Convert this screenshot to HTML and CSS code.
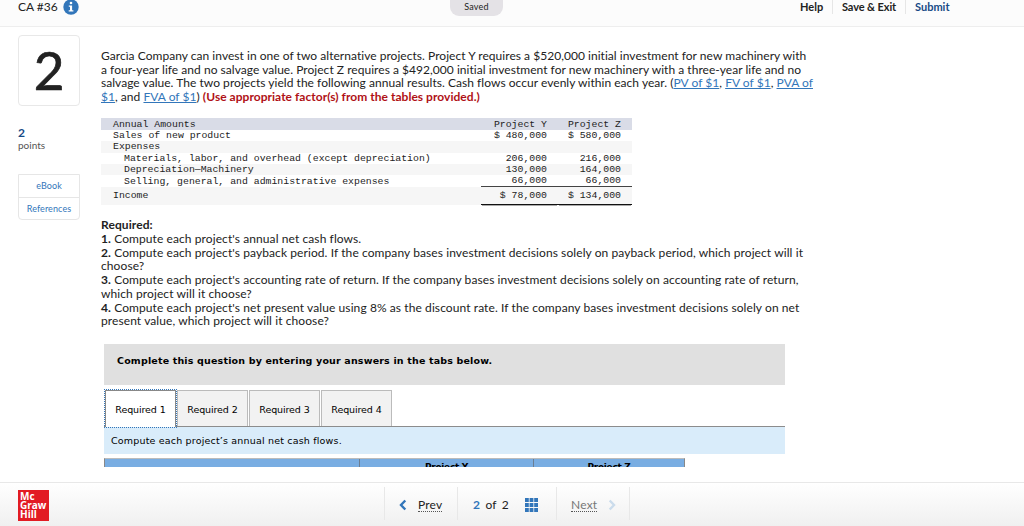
FILE: index.html
```
<!DOCTYPE html>
<html lang="en">
<head>
    <meta charset="UTF-8">
    <meta name="viewport" content="width=device-width, initial-scale=1.0">
    <title>CA #36</title>
    <link rel="stylesheet" href="styles.css">
</head>
<body>
    <header class="top-bar">
        <div class="title">CA #36</div>
        <svg class="info-icon" viewBox="0 0 16 16" width="16" height="16">
            <circle cx="8" cy="8" r="7.7" fill="#3276ba"/>
            <circle cx="8" cy="4" r="1.3" fill="#fff"/>
            <path d="M5.8 6.4h3.3v4.9h1.3v1.3H5.7v-1.3H7V7.7H5.8z" fill="#fff"/>
        </svg>
        <div class="saved">Saved</div>
        <nav class="top-links">
            <a class="help">Help</a>
            <a class="save-exit">Save &amp; Exit</a>
            <a class="submit">Submit</a>
        </nav>
    </header>

    <main class="main-container">
        <aside class="sidebar">
            <div class="question-number">2</div>
            <div class="points"><b>2</b>points</div>
            <div class="resources">
                <a>eBook</a>
                <a>References</a>
            </div>
        </aside>

        <section class="question">
            <p class="intro">
                Garcìa Company can invest in one of two alternative projects. Project Y requires a $520,000 initial investment for new machinery with<br>
                a four-year life and no salvage value. Project Z requires a $492,000 initial investment for new machinery with a three-year life and no<br>
                salvage value. The two projects yield the following annual results. Cash flows occur evenly within each year. (<a>PV of $1</a>, <a>FV of $1</a>, <a>PVA of</a><br>
                <a>$1</a>, and <a>FVA of $1</a>) <b class="note">(Use appropriate factor(s) from the tables provided.)</b>
            </p>

            <table class="amounts">
                <tr class="head"><td>Annual Amounts</td><td>Project Y</td><td>Project Z</td></tr>
                <tr><td>Sales of new product</td><td>$ 480,000</td><td>$ 580,000</td></tr>
                <tr class="shade"><td>Expenses</td><td></td><td></td></tr>
                <tr class="sub"><td>Materials, labor, and overhead (except depreciation)</td><td>206,000</td><td>216,000</td></tr>
                <tr class="sub shade"><td>Depreciation—Machinery</td><td>130,000</td><td>164,000</td></tr>
                <tr class="sub last"><td>Selling, general, and administrative expenses</td><td>66,000</td><td>66,000</td></tr>
                <tr class="shade income"><td>Income</td><td>$ 78,000</td><td>$ 134,000</td></tr>
            </table>

            <p class="required">
                <b>Required:</b><br>
                <b>1.</b> Compute each project's annual net cash flows.<br>
                <b>2.</b> Compute each project's payback period. If the company bases investment decisions solely on payback period, which project will it<br>
                choose?<br>
                <b>3.</b> Compute each project's accounting rate of return. If the company bases investment decisions solely on accounting rate of return,<br>
                which project will it choose?<br>
                <b>4.</b> Compute each project's net present value using 8% as the discount rate. If the company bases investment decisions solely on net<br>
                present value, which project will it choose?
            </p>

            <div class="answer">
                <div class="answer-title">Complete this question by entering your answers in the tabs below.</div>
                <div class="tabs">
                    <div class="tab active">Required 1</div>
                    <div class="tab">Required 2</div>
                    <div class="tab">Required 3</div>
                    <div class="tab">Required 4</div>
                </div>
                <div class="tab-text">Compute each project’s annual net cash flows.</div>
                <div class="sheet">
                    <div></div>
                    <div>Project Y</div>
                    <div>Project Z</div>
                </div>
            </div>
        </section>
    </main>

    <footer class="bottom-bar">
        <div class="logo">Mc<br>Graw<br>Hill</div>
        <div class="pager">
            <div class="prev">
                <svg viewBox="0 0 8 12" width="8" height="12"><path d="M6.3 1.5L2 6l4.3 4.5" fill="none" stroke="#3276ba" stroke-width="2.4"/></svg>
                <span>Prev</span>
            </div>
            <div class="current">
                <b>2</b><span>of</span><span>2</span>
                <svg viewBox="0 0 13 14" width="13" height="14" fill="#3276ba">
                    <path d="M0 0h3.8v4H0zM4.6 0h3.8v4H4.6zM9.2 0H13v4H9.2zM0 5h3.8v4H0zM4.6 5h3.8v4H4.6zM9.2 5H13v4H9.2zM0 10h3.8v4H0zM4.6 10h3.8v4H4.6zM9.2 10H13v4H9.2z"/>
                </svg>
            </div>
            <div class="next">
                <span>Next</span>
                <svg viewBox="0 0 8 12" width="8" height="12"><path d="M1.7 1.5L6 6l-4.3 4.5" fill="none" stroke="#cbdcec" stroke-width="2.4"/></svg>
            </div>
        </div>
    </footer>
</body>
</html>
```
FILE: styles.css
```
* {
    box-sizing: border-box;
}
body {
    margin: 0;
    height: 526px;
    overflow: hidden;
    display: flex;
    flex-direction: column;
    font-family: Lato, sans-serif;
    font-size: 12px;
    color: #222;
    background: #fff;
}
p {
    margin: 0;
}
.top-bar {
    height: 27px;
    flex: none;
    display: flex;
    align-items: flex-start;
    padding-left: 18px;
    background: #fcfcfc;
    border-bottom: 1px solid #eee;
}
.title {
    width: 45px;
    line-height: 14px;
    white-space: nowrap;
}
.info-icon {
    margin-top: -1px;
}
.saved {
    width: 53px;
    height: 16px;
    margin-left: 371px;
    border-radius: 0 0 9px 9px;
    background: #e4e2e6;
    font-size: 9px;
    line-height: 13px;
    letter-spacing: 0.2px;
    text-align: center;
}
.top-links {
    display: flex;
    margin-left: 297px;
    font-size: 11px;
    font-weight: bold;
    line-height: 14px;
    white-space: nowrap;
}
.top-links .help {
    width: 32px;
}
.top-links .save-exit {
    width: 74px;
    padding-left: 9px;
    border-left: 1px solid #e6e6e6;
    border-right: 1px solid #e6e6e6;
    letter-spacing: -0.1px;
}
.top-links .submit {
    padding-left: 9px;
    color: #174a86;
}
.main-container {
    height: 440px;
    flex: none;
    overflow: hidden;
    display: flex;
}
.sidebar {
    width: 62px;
    margin: 8px 21px 0 18px;
    flex: none;
}
.question-number {
    height: 71px;
    border: 1px solid #e8e8e8;
    border-radius: 4px;
    font-size: 53px;
    line-height: 68px;
    text-align: center;
    -webkit-text-stroke: 0.7px #222;
}
.points {
    margin-top: 20px;
    font-size: 10px;
    line-height: 13px;
    color: #555;
}
.points b {
    display: block;
    font-size: 12px;
    color: #174a86;
}
.resources {
    margin-top: 22px;
    border: 1px solid #e6e6e6;
    border-radius: 0 0 4px 4px;
    font-size: 9px;
    letter-spacing: 0.1px;
    text-align: center;
    color: #3276ba;
}
.resources a {
    display: block;
    height: 22px;
    line-height: 22px;
}
.resources a + a {
    border-top: 1px solid #e6e6e6;
}
.question {
    width: 720px;
    padding-top: 22px;
}
.intro, .required {
    font-size: 12px;
    line-height: 13.7px;
    letter-spacing: 0.035px;
    white-space: nowrap;
}
.intro a {
    color: #3276ba;
    text-decoration: underline;
}
.note {
    color: #b01116;
}
.amounts {
    width: 531px;
    margin-top: 14px;
    border-collapse: collapse;
    table-layout: fixed;
    font-family: "Courier New", "Liberation Mono", monospace;
    font-size: 9.83px;
    line-height: 10px;
    white-space: nowrap;
}
.amounts td {
    height: 11.4px;
    padding: 1px 11px 0 0;
    text-align: right;
}
.amounts td:first-child {
    width: 380px;
    padding-left: 12px;
    text-align: left;
}
.amounts td:nth-child(2) {
    width: 77px;
}
.amounts .sub td:first-child {
    padding-left: 23px;
}
.amounts .head {
    background: #d9dce7;
}
.amounts .head td {
    height: 12px;
    padding-top: 2px;
}
.amounts .shade {
    background: #f6f6f6;
}
.amounts .income td {
    height: 18px;
}
.amounts .income td + td {
    border-top: 1px solid #444;
    border-bottom: 1px solid #111;
    box-shadow: 0 2px 0 -1px #aaa;
}
.required {
    margin-top: 13px;
    letter-spacing: 0.09px;
}
.answer {
    width: 681px;
    margin: 16px 0 0 3px;
    font-family: Verdana, "DejaVu Sans", sans-serif;
    font-size: 9.5px;
    color: #000;
    white-space: nowrap;
}
.answer-title {
    height: 41px;
    padding: 0 13px;
    line-height: 34px;
    font-weight: bold;
    letter-spacing: 0.17px;
    background: #e0e0e0;
}
.tabs {
    display: flex;
    gap: 1px;
    height: 42px;
    padding: 5px 0 0 1px;
    border-bottom: 1px solid #8c8c8c;
}
.tab {
    width: 71px;
    height: 36px;
    border: 1px solid #bbb;
    border-bottom: 0;
    background: #f2f2f2;
    line-height: 37px;
    letter-spacing: -0.1px;
    text-align: center;
}
.tab.active {
    height: 37px;
    background: #fff;
    border-color: #888;
    outline: 1px dotted #3276ba;
}
.tab-text {
    height: 27px;
    padding-left: 7px;
    line-height: 27px;
    letter-spacing: 0.18px;
    background: #d9ecfa;
}
.sheet {
    display: flex;
    width: 581px;
    margin-top: 4px;
    border: 1px solid #aaa;
    border-color: #bbb #888;
    background: #79ade2;
    font-weight: bold;
    font-size: 9px;
    line-height: 17px;
    letter-spacing: -0.3px;
    text-align: center;
}
.sheet div {
    width: 254px;
    height: 20px;
}
.sheet div + div {
    width: 174px;
    border-left: 1px solid #6b7d92;
}
.sheet div:last-child {
    width: 151px;
}
.bottom-bar {
    height: 44px;
    flex: none;
    display: flex;
    margin-top: 15px;
    padding-left: 18px;
    border-top: 1px solid #e8e8e8;
    background: linear-gradient(#fff, #f0f0f0);
}
.logo {
    width: 31px;
    height: 31px;
    margin-top: 7px;
    padding: 2px 0 0 2px;
    background: #e21b23;
    color: #fff;
    font-family: "Open Sans", sans-serif;
    font-size: 10px;
    font-weight: bold;
    line-height: 9px;
}
.pager {
    display: flex;
    height: 33px;
    margin: 4px 0 0 335px;
    border: 1px solid #e8e8e8;
    border-width: 0 1px;
    font-size: 12px;
    line-height: 36px;
}
.pager > div {
    display: flex;
    align-items: center;
    padding-top: 2px;
}
.prev {
    width: 72px;
    padding-left: 14px;
    gap: 11px;
}
.prev span, .next span {
    line-height: 13px;
    letter-spacing: 0.2px;
    border-bottom: 1px dotted #555;
}
.current {
    width: 100px;
    padding-left: 15px;
    gap: 5.5px;
    border: 1px solid #e8e8e8;
    border-width: 0 1px;
}
.current b {
    color: #3276ba;
}
.current svg {
    margin-left: 11px;
}
.next {
    width: 72px;
    padding-left: 14px;
    gap: 11px;
    color: #777;
}
```
